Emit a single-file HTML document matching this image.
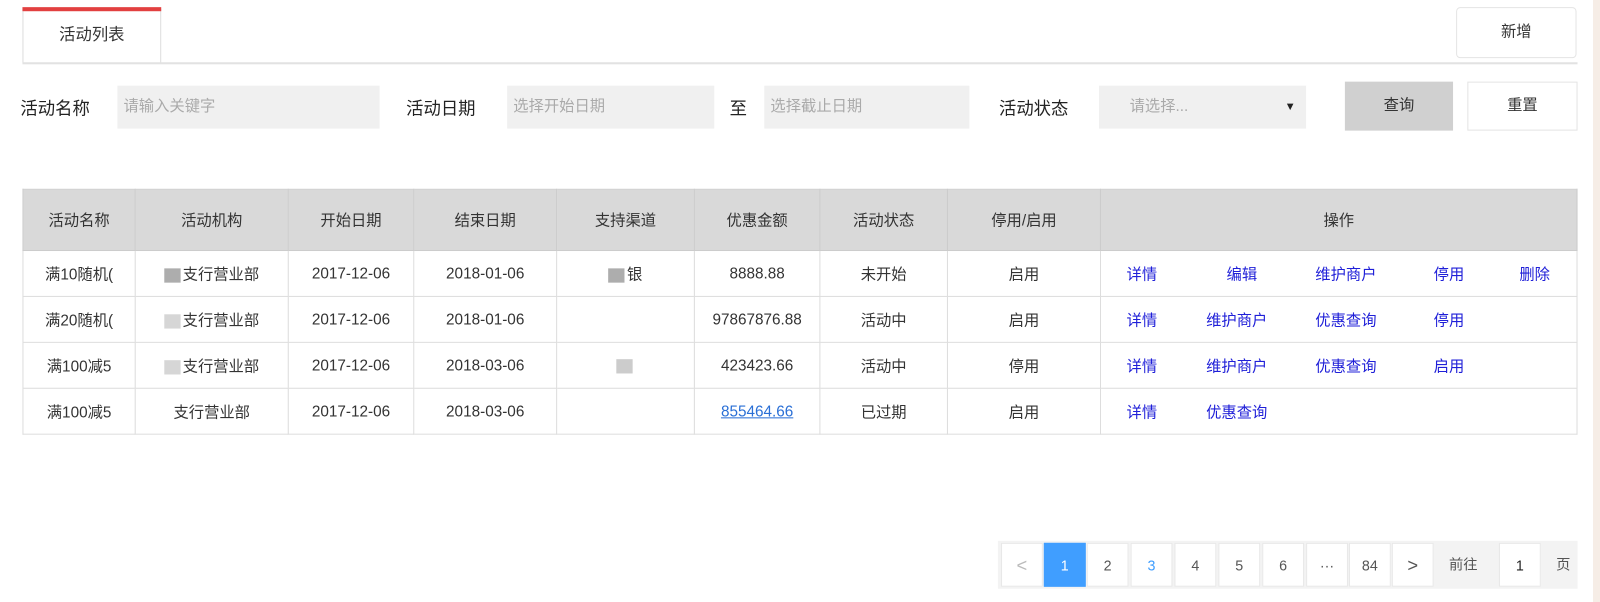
<!DOCTYPE html>
<html><head><meta charset="utf-8"><style>
*{margin:0;padding:0;box-sizing:border-box}
body{width:1600px;height:602px;background:#fff;position:relative;overflow:hidden;font-family:"Liberation Sans","Noto Sans CJK SC",sans-serif;color:#333;font-size:15px}
#w{position:absolute;left:0;top:0;width:1568px;height:590px;transform:scale(1.0204);transform-origin:0 0}
.a{position:absolute}
.strip{position:absolute;right:0;top:0;width:7px;height:602px;background:#f6ede6}
.tab{left:22px;top:9px;width:136px;height:53px;border:1px solid #ddd;border-bottom:none;background:#fff;text-align:center;line-height:50px;font-size:16px}
.tab:before{content:"";position:absolute;left:-1px;right:-1px;top:-3px;height:4px;background:#e24040}
.line{left:22px;top:61px;width:1524px;height:2px;background:#e2e2e2}
.btn{border:1px solid #e4e4e4;border-radius:4px;text-align:center;background:#fff}
.inp{background:#f0f0f0;color:#aaa;padding-left:6px;line-height:42px;height:42px;top:84px}
.lbl{top:84px;line-height:46px;font-size:17px;color:#222}
table{position:absolute;left:22px;top:185px;width:1524px;border-collapse:collapse;font-size:15px}
td,th{border:1px solid #ddd;text-align:center;height:45px;font-weight:normal;white-space:nowrap}
th{background:#d9d9d9;height:60px;border-color:#ccc}
.ops{position:relative}
.ops span{position:absolute;top:12px;color:#1f1fd8}
.bl{display:inline-block;width:16px;height:14px;background:#999;vertical-align:middle;margin-right:2px;opacity:.8}
.pg{top:532px;height:43px;width:41px;border:1px solid #e8e8e8;background:#fff;text-align:center;line-height:42px;font-size:14px;color:#555}
</style></head><body>
<div class="strip"></div>
<div id="w">
<div class="a tab">活动列表</div>
<div class="a line"></div>
<div class="a btn" style="left:1427px;top:7px;width:118px;height:50px;line-height:48px">新增</div>

<div class="a lbl" style="left:20px">活动名称</div>
<div class="a inp" style="left:115px;width:257px">请输入关键字</div>
<div class="a lbl" style="left:398px">活动日期</div>
<div class="a inp" style="left:497px;width:203px">选择开始日期</div>
<div class="a lbl" style="left:715px">至</div>
<div class="a inp" style="left:749px;width:201px">选择截止日期</div>
<div class="a lbl" style="left:979px">活动状态</div>
<div class="a inp" style="left:1077px;width:203px;padding-left:30px">请选择...<span style="position:absolute;left:182px;color:#222;font-size:11px">▼</span></div>
<div class="a" style="left:1318px;top:80px;width:106px;height:48px;background:#d0d0d0;line-height:48px;text-align:center">查询</div>
<div class="a btn" style="left:1438px;top:80px;width:108px;height:48px;line-height:46px;border-radius:0">重置</div>

<table>
<tr><th style="width:110px">活动名称</th><th style="width:150px">活动机构</th><th style="width:123px">开始日期</th><th style="width:140px">结束日期</th><th style="width:135px">支持渠道</th><th style="width:123px">优惠金额</th><th style="width:125px">活动状态</th><th style="width:150px">停用/启用</th><th>操作</th></tr>
<tr><td>满10随机(</td><td><span class="bl"></span>支行营业部</td><td>2017-12-06</td><td>2018-01-06</td><td><span class="bl"></span>银</td><td>8888.88</td><td>未开始</td><td>启用</td><td class="ops"><span style="left:25px">详情</span><span style="left:123px">编辑</span><span style="left:210px">维护商户</span><span style="left:326px">停用</span><span style="left:410px">删除</span></td></tr>
<tr><td>满20随机(</td><td><span class="bl" style="opacity:.4"></span>支行营业部</td><td>2017-12-06</td><td>2018-01-06</td><td>&nbsp;</td><td>97867876.88</td><td>活动中</td><td>启用</td><td class="ops"><span style="left:25px">详情</span><span style="left:103px">维护商户</span><span style="left:210px">优惠查询</span><span style="left:326px">停用</span></td></tr>
<tr><td>满100减5</td><td><span class="bl" style="opacity:.4"></span>支行营业部</td><td>2017-12-06</td><td>2018-03-06</td><td><span class="bl" style="opacity:.5"></span></td><td>423423.66</td><td>活动中</td><td>停用</td><td class="ops"><span style="left:25px">详情</span><span style="left:103px">维护商户</span><span style="left:210px">优惠查询</span><span style="left:326px">启用</span></td></tr>
<tr><td>满100减5</td><td>支行营业部</td><td>2017-12-06</td><td>2018-03-06</td><td>&nbsp;</td><td><span style="color:#2a6fd6;text-decoration:underline">855464.66</span></td><td>已过期</td><td>启用</td><td class="ops"><span style="left:25px">详情</span><span style="left:103px">优惠查询</span></td></tr>
</table>

<div class="a" style="left:978px;top:530px;width:568px;height:47px;background:#f3f3f3"></div>
<div class="a pg" style="left:981px;color:#bbb;font-size:18px">&lt;</div>
<div class="a pg" style="left:1023px;background:#409eff;color:#fff;border-color:#409eff">1</div>
<div class="a pg" style="left:1065px">2</div>
<div class="a pg" style="left:1108px;color:#409eff">3</div>
<div class="a pg" style="left:1151px">4</div>
<div class="a pg" style="left:1194px">5</div>
<div class="a pg" style="left:1237px">6</div>
<div class="a pg" style="left:1280px">···</div>
<div class="a pg" style="left:1322px">84</div>
<div class="a pg" style="left:1364px;font-size:18px">&gt;</div>
<div class="a" style="left:1420px;top:532px;line-height:43px;font-size:14px;color:#555">前往</div>
<div class="a pg" style="left:1469px;color:#222">1</div>
<div class="a" style="left:1525px;top:532px;line-height:43px;font-size:14px;color:#555">页</div>
</div>
</body></html>
